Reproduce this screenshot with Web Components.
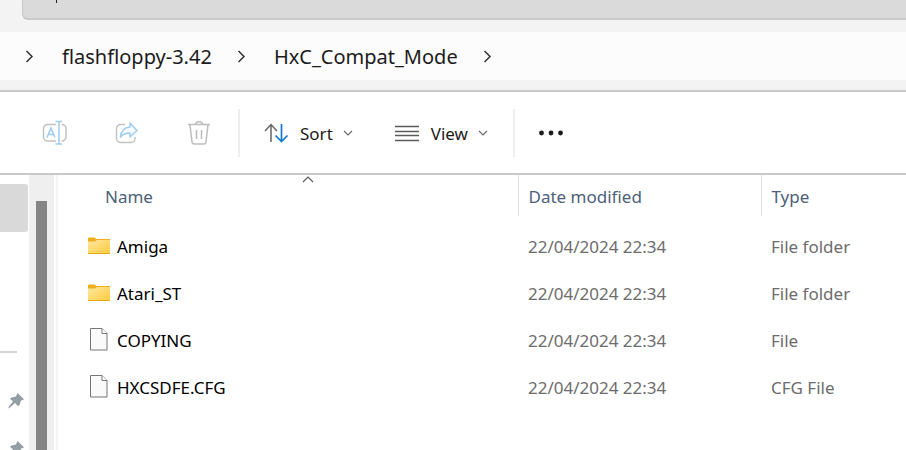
<!DOCTYPE html>
<html lang="en">
<head>
<meta charset="utf-8">
<title>HxC_Compat_Mode</title>
<style>
  html, body { height: 100%; }
  body { margin: 0; background: #fff; overflow: hidden; font-family: "Segoe UI", "Noto Sans", "Open Sans", sans-serif; font-size: 17px; color: #1b1b1b; }
</style>
</head>
<body>
<file-explorer>
  <address-strip slot="top"></address-strip>
  <crumb-bar slot="top">
    <crumb-item>flashfloppy-3.42</crumb-item>
    <crumb-item>HxC_Compat_Mode</crumb-item>
  </crumb-bar>
  <command-bar slot="top"></command-bar>
  <nav-pane slot="side"></nav-pane>
  <file-list></file-list>
</file-explorer>

<script>
const icons = {
  right: [10, 14, '<path d="M1.500 2l5.500 5.500L1.500 13" fill="none" stroke="#333" stroke-width="1.5"/>'],
  down: [10, 6, '<path d="M1 1l4 4 4-4" fill="none" stroke="#666" stroke-width="1.1"/>'],
  up: [12, 7, '<path d="M1 6l5-5 5 5" fill="none" stroke="#555" stroke-width="1.1"/>'],
  rename: [26, 26, '<g fill="none" stroke="#c2c2c2" stroke-width="1.5"><path d="M14 4.500H5.500A4 4 0 0 0 1.500 8.500V17A4 4 0 0 0 5.500 21H14M19.500 4.500A4 4 0 0 1 24 8.500V17A4 4 0 0 1 19.500 21"/></g><g fill="none" stroke="#9dcdf0" stroke-width="1.500"><path d="M5 17.500L9 8l4 9.500M6.500 14.500H11.500"/><path d="M13.500 1.500H20M13.500 24H20M17 1.500V24"/></g>'],
  share: [26, 26, '<path d="M11 4.500H6.500A4 4 0 0 0 2.500 8.500V18.500A4 4 0 0 0 6.500 22.500H17A4 4 0 0 0 21 18.500V17" fill="none" stroke="#c2c2c2" stroke-width="1.500"/><path d="M16 3l7 7.500-7 6.500v-4c-4 0-7 1-9.500 4 .5-6 3.500-9.500 9.500-10z" fill="#f4faff" stroke="#9dcdf0" stroke-width="1.500" stroke-linejoin="round"/>'],
  trash: [26, 26, '<g fill="none" stroke="#bdbdbd" stroke-width="1.500"><path d="M2 4.500H24M4 5l2 17q.3 2 2.300 2h9.400q2 0 2.300-2l2-17M9.500 4.500q0-2.800 3.500-2.800t3.500 2.800M10.500 10v9M15.500 10v9"/></g>'],
  sort: [26, 20, '<path d="M7 19V1.500M1 8L7 1.500 13 8" fill="none" stroke="#666" stroke-width="1.500"/><path d="M17.500 1V18.500M11.500 12.500l6 6 6-6" fill="none" stroke="#0f7bd0" stroke-width="1.700"/>'],
  view: [26, 17, '<path d="M0 1.500H24M0 6.500H24M0 10.500H24M0 15.500H24" stroke="#5c5c5c" stroke-width="1.300"/>'],
  more: [26, 8, '<g fill="#1b1b1b"><circle cx="3.500" cy="4" r="2.400"/><circle cx="13" cy="4" r="2.400"/><circle cx="22.500" cy="4" r="2.400"/></g>'],
  folder: [22, 18, '<defs><linearGradient id="f" x1="0" y1="0" x2="1" y2="1"><stop offset="0" stop-color="#ffe7a0"/><stop offset="1" stop-color="#ffcb3d"/></linearGradient></defs><path d="M0 1.500Q0 .5 1 .5H6.500L8.500 2H22V6H0z" fill="#f0b01e"/><path d="M0 4.500H7L9 3H22V17H0z" fill="url(#f)"/><path d="M0 16.500H22" stroke="#e6a91b"/>'],
  file: [18, 23, '<path d="M.5 .5H12L17 5.500V22H.5z" fill="#fafafa" stroke="#777"/><path d="M12 .5V5.500H17" fill="#fff" stroke="#777"/>'],
  pin: [17, 17, '<path d="M9.500 1L16 7.200l-1.500 1-1.500.3-1.500 4.500-1.500 1-3-3L2 15.500 0 16.500 1 14.500 5 9.500 2 6.800l1.500-1.300L8 4.500z" fill="#929da4"/>']
};

const define = (name, markup, setup) => customElements.define(name, class extends HTMLElement {
  constructor() {
    super();
    const t = document.createElement('template');
    t.innerHTML = markup;
    this.attachShadow({ mode: 'open' }).append(t.content.cloneNode(true));
  }
  connectedCallback() { if (setup) setup(this, this.shadowRoot); }
});

define('ui-icon', '<style>:host{display:block;flex:none}svg{display:block}</style><span></span>', (el, root) => {
  const [w, h, body] = icons[el.getAttribute('name')];
  root.querySelector('span').innerHTML = `<svg width="${w}" height="${h}" viewBox="0 0 ${w} ${h}" aria-hidden="true">${body}</svg>`;
});

define('address-strip', `<style>
  :host{display:block;background:#f3f3f3;padding:0 0 12px 22px}
  .box{box-sizing:border-box;height:20px;background:#dadada;border:solid #c9c9c9;border-width:0 0 2px 1px;border-radius:0 0 0 6px;padding-left:33px}
  .tick{width:1px;height:3px;background:#222}
</style><div class="box"><div class="tick"></div></div>`);

define('crumb-bar', `<style>
  :host{display:block;background:#f3f3f3;padding-bottom:10px;border-bottom:2px solid #c8c8c8}
  nav{display:flex;align-items:center;height:48px;padding-left:25px;background:#fcfcfc;font-size:20px}
</style><nav aria-label="Path"><ui-icon name="right"></ui-icon><slot></slot></nav>`);

define('crumb-item', `<style>
  :host{display:flex;align-items:center}
  a{color:#1b1b1b;text-decoration:none;margin:0 25px 0 27px;padding-top:2px;line-height:28px}
</style><a href="#"><slot></slot></a><ui-icon name="right"></ui-icon>`);

define('command-button', `<style>
  :host{display:block}
  button{display:flex;align-items:center;gap:10px;height:48px;padding:1px 0 0;border:0;background:none;font:inherit;color:inherit}
</style><button><slot></slot></button>`, (el, root) => {
  const button = root.querySelector('button');
  const icon = name => {
    const node = document.createElement('ui-icon');
    node.setAttribute('name', name);
    return node;
  };
  button.prepend(icon(el.getAttribute('icon')));
  if (el.title) button.setAttribute('aria-label', el.title);
  if (el.hasAttribute('menu')) button.append(icon('down'));
});

define('command-bar', `<style>
  :host{display:flex;align-items:center;height:81px;background:#fff;border-bottom:2px solid #c8c8c8}
  .group{display:flex;align-items:center;box-sizing:border-box;height:48px}
  .edit{gap:46px;padding:0 26px 0 42px;border-right:2px solid #eee}
  .show{gap:42px;padding:0 25px 0 24px;border-right:2px solid #eee}
  .rest{padding-left:23px}
</style>
<div class="group edit"><command-button icon="rename" title="Rename"></command-button><command-button icon="share" title="Share"></command-button><command-button icon="trash" title="Delete"></command-button></div>
<div class="group show"><command-button icon="sort" menu>Sort</command-button><command-button icon="view" menu>View</command-button></div>
<div class="group rest"><command-button icon="more" title="See more"></command-button></div>`);

define('nav-pane', `<style>
  :host{display:flex}
  .items{width:29px;display:flex;flex-direction:column;align-items:flex-start}
  .items > *{flex:none}
  .selected{width:28px;height:48px;margin-top:9px;background:#d9d9d9;border-radius:0 3px 3px 0}
  .rule{width:17px;height:2px;margin-top:119px;background:#d5d5d5}
  .pins{display:grid;gap:31px;padding:39px 0 0 8px}
  .track{width:25px;background:#efefef;display:flex;justify-content:center;padding-top:26px;box-sizing:border-box}
  .thumb{width:11px;background:#858585}
  .edge{width:2px;margin-left:2px;background:#f5f5f5}
</style>
<div class="items"><div class="selected"></div><div class="rule"></div><div class="pins"><ui-icon name="pin"></ui-icon><ui-icon name="pin"></ui-icon></div></div>
<div class="track"><div class="thumb"></div></div><div class="edge"></div>`);

define('file-list', `<style>
  :host{display:block}
  table{width:100%;border-collapse:collapse;table-layout:fixed}
  .name{width:460px}.date{width:243px}
  th,td{padding:0;text-align:left;font-weight:400;box-sizing:border-box}
  thead tr{height:41px}
  th + th{border-left:1px solid #e2e2e2}
  th{vertical-align:top}
  th button{position:relative;display:block;width:100%;height:41px;border:0;background:none;font:inherit;color:#4c607a;text-align:left;padding:2px 0 0 10px}
  th:first-child button{padding-left:47px}
  th ui-icon{position:absolute;top:1px;left:50%;margin-left:14px}
  tbody::before{content:"";display:block;height:7px}
  tbody tr{height:47px}
  td{color:#6d6d6d;padding-left:10px}
  td:first-child{color:#000;padding-left:30px}
  .entry{display:flex;align-items:center}
  .pic{width:29px;padding-bottom:2px}
  .pic.file{padding-left:2px;width:27px}
</style>
<table><colgroup><col class="name"><col class="date"><col></colgroup>
<thead><tr><th aria-sort="ascending"><button>Name<ui-icon name="up"></ui-icon></button></th><th><button>Date modified</button></th><th><button>Type</button></th></tr></thead><tbody></tbody></table>`, (el, root) => {
  const rows = [['folder', 'Amiga', 'File folder'], ['folder', 'Atari_ST', 'File folder'], ['file', 'COPYING', 'File'], ['file', 'HXCSDFE.CFG', 'CFG File']];
  root.querySelector('tbody').innerHTML = rows.map(([icon, name, type]) =>
    `<tr><td><div class="entry"><span class="pic ${icon}"><ui-icon name="${icon}"></ui-icon></span>${name}</div></td><td>22/04/2024 22:34</td><td>${type}</td></tr>`).join('');
});

define('file-explorer', `<style>
  :host{display:flex;flex-direction:column;height:100%}
  main{display:flex;flex:1;min-height:0;overflow:hidden}
  .content{flex:1;min-width:0}
</style><slot name="top"></slot><main><slot name="side"></slot><div class="content"><slot></slot></div></main>`);
</script>
</body>
</html>
